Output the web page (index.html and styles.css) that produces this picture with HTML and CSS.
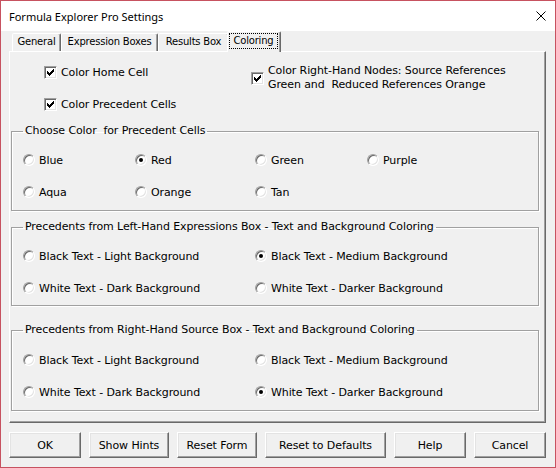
FILE: index.html
```html
<!DOCTYPE html>
<html>
<head>
<meta charset="utf-8">
<title>Formula Explorer Pro Settings</title>
<link rel="stylesheet" href="styles.css">
</head>
<body>
<div class="window">
  <div class="titlebar">
    <span class="title">Formula Explorer Pro Settings</span>
    <svg class="close" width="10" height="10" viewBox="0 0 10 10"><path d="M0.5 0.5 L9.5 9.5 M9.5 0.5 L0.5 9.5" stroke="#000" stroke-width="1" fill="none"/></svg>
  </div>
  <div class="client">
    <div class="tabs">
      <div class="tab t-general">General</div>
      <div class="tab t-expr">Expression Boxes</div>
      <div class="tab t-results">Results Box</div>
      <div class="tab selected"><span class="focus">Coloring</span></div>
    </div>
    <div class="panel">
      <div class="top">
        <div class="col-left">
          <div class="check"><span class="cbox"><svg width="7" height="7" viewBox="0 0 7 7"><path d="M6 0h1v1h-1z M5 1h2v1h-2z M0 2h1v1h-1z M4 2h3v1h-3z M0 3h2v1h-2z M3 3h3v1h-3z M0 4h5v1h-5z M1 5h3v1h-3z M2 6h1v1h-1z" fill="#000"/></svg></span><span>Color Home Cell</span></div>
          <div class="check"><span class="cbox"><svg width="7" height="7" viewBox="0 0 7 7"><path d="M6 0h1v1h-1z M5 1h2v1h-2z M0 2h1v1h-1z M4 2h3v1h-3z M0 3h2v1h-2z M3 3h3v1h-3z M0 4h5v1h-5z M1 5h3v1h-3z M2 6h1v1h-1z" fill="#000"/></svg></span><span>Color Precedent Cells</span></div>
        </div>
        <div class="col-right">
          <div class="check multi"><span class="cbox"><svg width="7" height="7" viewBox="0 0 7 7"><path d="M6 0h1v1h-1z M5 1h2v1h-2z M0 2h1v1h-1z M4 2h3v1h-3z M0 3h2v1h-2z M3 3h3v1h-3z M0 4h5v1h-5z M1 5h3v1h-3z M2 6h1v1h-1z" fill="#000"/></svg></span><span class="two-line">Color Right-Hand Nodes: Source References<br>Green and&nbsp; Reduced References Orange</span></div>
        </div>
      </div>

      <fieldset class="group g1">
        <legend>Choose Color&nbsp; for Precedent Cells</legend>
        <div class="grid cols4">
          <div class="opt"><span class="radio"></span><span>Blue</span></div>
          <div class="opt"><span class="radio on"></span><span>Red</span></div>
          <div class="opt"><span class="radio"></span><span>Green</span></div>
          <div class="opt"><span class="radio"></span><span>Purple</span></div>
          <div class="opt"><span class="radio"></span><span>Aqua</span></div>
          <div class="opt"><span class="radio"></span><span>Orange</span></div>
          <div class="opt"><span class="radio"></span><span>Tan</span></div>
        </div>
      </fieldset>

      <fieldset class="group g2">
        <legend>Precedents from Left-Hand Expressions Box - Text and Background Coloring</legend>
        <div class="grid cols2">
          <div class="opt"><span class="radio"></span><span>Black Text - Light Background</span></div>
          <div class="opt"><span class="radio on"></span><span>Black Text - Medium Background</span></div>
          <div class="opt"><span class="radio"></span><span>White Text - Dark Background</span></div>
          <div class="opt"><span class="radio"></span><span>White Text - Darker Background</span></div>
        </div>
      </fieldset>

      <fieldset class="group g3">
        <legend>Precedents from Right-Hand Source Box - Text and Background Coloring</legend>
        <div class="grid cols2">
          <div class="opt"><span class="radio"></span><span>Black Text - Light Background</span></div>
          <div class="opt"><span class="radio"></span><span>Black Text - Medium Background</span></div>
          <div class="opt"><span class="radio"></span><span>White Text - Dark Background</span></div>
          <div class="opt"><span class="radio on"></span><span>White Text - Darker Background</span></div>
        </div>
      </fieldset>
    </div>
    <div class="buttons">
      <div class="btn w72">OK</div>
      <div class="btn w80">Show Hints</div>
      <div class="btn w80">Reset Form</div>
      <div class="btn w121">Reset to Defaults</div>
      <div class="btn w72">Help</div>
      <div class="btn w72">Cancel</div>
    </div>
  </div>
</div>
</body>
</html>
```
FILE: styles.css
```css
* { box-sizing: border-box; }
html, body { margin: 0; padding: 0; }
body {
  width: 556px;
  height: 468px;
  overflow: hidden;
  font-family: "DejaVu Sans", sans-serif;
  font-size: 11px;
  letter-spacing: -0.1px;
  color: #000;
}
.window {
  width: 556px;
  height: 468px;
  border: 1px solid #c75260;
  background: #f0f0f0;
  display: flex;
  flex-direction: column;
}
.titlebar {
  height: 30px;
  flex: none;
  background: #fff;
  display: flex;
  align-items: center;
  justify-content: space-between;
  padding: 0 9px 0 8px;
}
.title {
  font-family: "Noto Sans", sans-serif;
  font-size: 11px;
  letter-spacing: 0;
  color: #000;
}
.close { display: block; }

.client {
  flex: 1;
  display: flex;
  flex-direction: column;
  padding: 0 9px 9px 8px;
}

/* tabs */
.tabs {
  height: 21px;
  margin-bottom: -1px;
  display: flex;
  align-items: flex-end;
  padding-left: 3px;
  position: relative;
  z-index: 1;
}
.tab {
  height: 18px;
  margin-bottom: 1px;
  padding: 0 2px;
  font-size: 10px;
  letter-spacing: -0.2px;
  line-height: 16px;
  text-align: center;
  border: 1px solid;
  border-bottom: none;
  border-color: #fff #696969 transparent #fff;
  border-radius: 2px 2px 0 0;
  box-shadow: inset -1px 0 0 #a0a0a0;
  background: #f0f0f0;
  white-space: nowrap;
}
.t-general { width: 49px; }
.t-expr { width: 97px; }
.t-results { width: 71px; }
.tab.selected {
  width: 54px;
  height: 21px;
  margin: 0 0 0 -2px;
  padding: 1px 2px 0 1px;
  line-height: 14px;
  position: relative;
}
.focus {
  display: block;
  height: 16px;
  border: 1px dotted #000;
}

/* panel */
.panel {
  height: 372px;
  flex: none;
  border: 1px solid;
  border-color: #fff #696969 #696969 #fff;
  box-shadow: inset -1px -1px 0 #a0a0a0;
  padding: 0 6px 0 1px;
}
.top {
  height: 72px;
  display: flex;
  padding-top: 12px;
}
.col-left {
  width: 240px;
  padding-left: 33px;
  display: flex;
  flex-direction: column;
  gap: 16px;
}
.check {
  display: flex;
  align-items: center;
  gap: 4px;
  height: 16px;
  white-space: nowrap;
}
.check.multi { height: 28px; }
.two-line { line-height: 14px; }
.cbox {
  width: 13px;
  height: 13px;
  flex: none;
  background: #fff;
  border: 1px solid;
  border-color: #a0a0a0 #fff #fff #a0a0a0;
  box-shadow: inset 1px 1px 0 #696969, inset -1px -1px 0 #e3e3e3;
  display: flex;
  align-items: center;
  justify-content: center;
}
.cbox svg { display: block; shape-rendering: crispEdges; }

/* group boxes */
fieldset.group {
  margin: 0;
  min-width: 0;
  border: 1px solid #a0a0a0;
  box-shadow: 1px 1px 0 #fff, inset 1px 1px 0 #fff;
  padding: 14px 0 10px 11px;
}
fieldset.group legend {
  padding: 0 2px;
  line-height: 14px;
  white-space: nowrap;
}
fieldset.group.g2 { margin-top: 9px; padding-bottom: 9px; }
fieldset.group.g3 { margin-top: 17px; padding-top: 15px; }

.grid {
  display: grid;
  grid-auto-rows: 16px;
  row-gap: 16px;
}
.cols4 { grid-template-columns: 112px 120px 112px auto; }
.cols2 { grid-template-columns: 232px auto; }
.opt {
  display: flex;
  align-items: center;
  gap: 4px;
  white-space: nowrap;
}
.radio {
  width: 12px;
  height: 12px;
  flex: none;
  border-radius: 50%;
  background: #fff;
  border: 1px solid;
  border-color: #a0a0a0 #fff #fff #a0a0a0;
  box-shadow: inset 1px 1px 0 #696969, inset -1px -1px 0 #e3e3e3;
  display: flex;
  align-items: center;
  justify-content: center;
}
.radio.on::after {
  content: "";
  width: 4px;
  height: 4px;
  border-radius: 50%;
  background: #000;
}

/* buttons */
.buttons {
  margin-top: 9px;
  height: 26px;
  display: flex;
  justify-content: space-between;
}
.btn {
  height: 26px;
  border: 1px solid;
  border-color: #fff #696969 #696969 #fff;
  box-shadow: inset -1px -1px 0 #a0a0a0, inset 1px 1px 0 #e3e3e3;
  background: #f0f0f0;
  display: flex;
  align-items: center;
  justify-content: center;
  white-space: nowrap;
}
.w72 { width: 72px; }
.w80 { width: 80px; }
.w121 { width: 121px; }
```
